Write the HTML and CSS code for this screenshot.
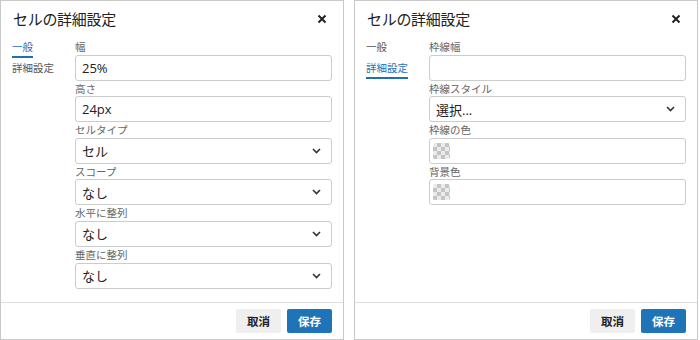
FILE: index.html
```html
<!DOCTYPE html>
<html lang="ja">
<head>
<meta charset="utf-8">
<link rel="stylesheet" href="styles.css">
</head>
<body>
<div class="wrap">
  <div class="dialog">
    <div class="head">
      <div class="title">セルの詳細設定</div>
      <svg class="close" width="10" height="10" viewBox="0 0 10 10"><path d="M1.5 1.5l7 7M8.5 1.5l-7 7" stroke="#222" stroke-width="2" fill="none"/></svg>
    </div>
    <div class="body">
      <div class="nav">
        <div class="nav-item active">一般</div>
        <div class="nav-item">詳細設定</div>
      </div>
      <div class="fields">
        <div class="field"><div class="label">幅</div><div class="input">25%</div></div>
        <div class="field"><div class="label">高さ</div><div class="input">24px</div></div>
        <div class="field"><div class="label">セルタイプ</div><div class="input select">セル<svg class="chev" width="9" height="6" viewBox="0 0 9 6"><path d="M1 1l3.5 3.5L8 1" fill="none" stroke="#333" stroke-width="1.6"/></svg></div></div>
        <div class="field"><div class="label">スコープ</div><div class="input select">なし<svg class="chev" width="9" height="6" viewBox="0 0 9 6"><path d="M1 1l3.5 3.5L8 1" fill="none" stroke="#333" stroke-width="1.6"/></svg></div></div>
        <div class="field"><div class="label">水平に整列</div><div class="input select">なし<svg class="chev" width="9" height="6" viewBox="0 0 9 6"><path d="M1 1l3.5 3.5L8 1" fill="none" stroke="#333" stroke-width="1.6"/></svg></div></div>
        <div class="field"><div class="label">垂直に整列</div><div class="input select">なし<svg class="chev" width="9" height="6" viewBox="0 0 9 6"><path d="M1 1l3.5 3.5L8 1" fill="none" stroke="#333" stroke-width="1.6"/></svg></div></div>
      </div>
    </div>
    <div class="foot">
      <button class="btn cancel">取消</button>
      <button class="btn save">保存</button>
    </div>
  </div>

  <div class="dialog">
    <div class="head">
      <div class="title">セルの詳細設定</div>
      <svg class="close" width="10" height="10" viewBox="0 0 10 10"><path d="M1.5 1.5l7 7M8.5 1.5l-7 7" stroke="#222" stroke-width="2" fill="none"/></svg>
    </div>
    <div class="body">
      <div class="nav">
        <div class="nav-item">一般</div>
        <div class="nav-item active">詳細設定</div>
      </div>
      <div class="fields">
        <div class="field"><div class="label">枠線幅</div><div class="input"></div></div>
        <div class="field"><div class="label">枠線スタイル</div><div class="input select">選択...<svg class="chev" width="9" height="6" viewBox="0 0 9 6"><path d="M1 1l3.5 3.5L8 1" fill="none" stroke="#333" stroke-width="1.6"/></svg></div></div>
        <div class="field"><div class="label">枠線の色</div><div class="input"><span class="swatch"></span></div></div>
        <div class="field"><div class="label">背景色</div><div class="input"><span class="swatch"></span></div></div>
      </div>
    </div>
    <div class="foot">
      <button class="btn cancel">取消</button>
      <button class="btn save">保存</button>
    </div>
  </div>
</div>
</body>
</html>
```

FILE: styles.css
```css
* { box-sizing: border-box; }
html, body { margin: 0; padding: 0; background: #fff; }
body {
  font-family: "Open Sans", "Noto Sans CJK JP", sans-serif;
  color: #222;
}
.wrap {
  display: flex;
  gap: 10px;
  width: 698px;
  height: 340px;
}
.dialog {
  width: 344px;
  height: 340px;
  border: 1px solid #c8c8c8;
  display: flex;
  flex-direction: column;
  background: #fff;
}
.head {
  height: 35px;
  display: flex;
  align-items: center;
  justify-content: space-between;
  padding: 0 16px 0 12px;
}
.title {
  font-size: 15px;
  font-family: "Noto Sans CJK JP", sans-serif;
  color: #222;
  letter-spacing: -0.3px;
}
.close { flex: none; }
.body {
  flex: 1;
  display: flex;
  padding: 3px 11px 0 11px;
}
.nav {
  width: 63px;
  flex: none;
  display: flex;
  flex-direction: column;
  align-items: flex-start;
  font-size: 10.5px;
  font-family: "Noto Sans CJK JP", sans-serif;
}
.nav-item {
  color: #555;
  line-height: 16px;
  padding-bottom: 1px;
  border-bottom: 2px solid transparent;
  margin-bottom: 2px;
}
.nav-item.active {
  color: #1f6fb2;
  border-bottom-color: #1f6fb2;
}
.fields {
  flex: 1;
  display: flex;
  flex-direction: column;
}
.label {
  font-size: 10.5px;
  line-height: 15.6px;
  color: #666;
  font-family: "Noto Sans CJK JP", sans-serif;
}
.input {
  height: 26px;
  border: 1px solid #ccc;
  border-radius: 3px;
  display: flex;
  align-items: center;
  padding: 0 10px 0 6px;
  font-size: 13px;
  color: #222;
}
.select { justify-content: space-between; }
.chev { flex: none; }
.swatch {
  width: 17px;
  height: 16px;
  border-radius: 2px;
  margin-left: -3px;
  background-image:
    linear-gradient(45deg, #c4c4c4 25%, transparent 25%, transparent 75%, #c4c4c4 75%),
    linear-gradient(45deg, #c4c4c4 25%, transparent 25%, transparent 75%, #c4c4c4 75%);
  background-size: 8px 8px;
  background-position: 0 0, 4px 4px;
  background-color: #ebebeb;
}
.foot {
  height: 37px;
  border-top: 1px solid #ddd;
  display: flex;
  justify-content: flex-end;
  align-items: center;
  gap: 6px;
  padding: 0 11px 1px;
}
.btn {
  height: 24px;
  width: 45px;
  border: none;
  border-radius: 2px;
  font-size: 11.5px;
  font-weight: bold;
  font-family: "Noto Sans CJK JP", sans-serif;
  padding: 0;
}
.cancel { background: #efefef; color: #222; }
.save { background: #1f74b8; color: #fff; }
```
